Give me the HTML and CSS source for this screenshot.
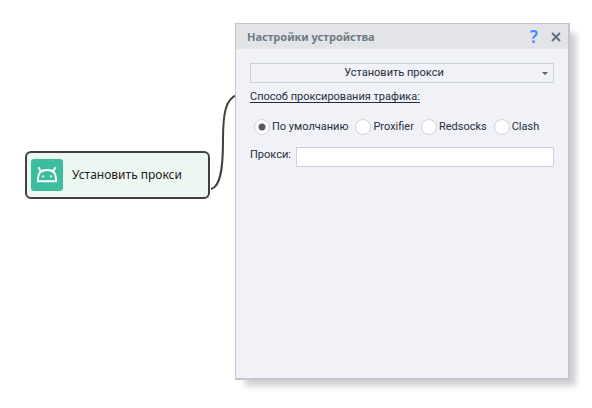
FILE: index.html
```html
<!DOCTYPE html>
<html lang="ru">
<head>
<meta charset="utf-8">
<title>Настройки устройства</title>
<link rel="stylesheet" href="styles.css">
</head>
<body>
<main class="canvas">
  <svg class="connector" width="32" height="100" viewBox="0 0 32 100" aria-hidden="true">
    <path d="M4 98C14 96 16 75 16 50C16 24 18 8 30 4"/>
  </svg>
  <div class="node">
    <svg class="node-icon" width="32" height="32" viewBox="0 0 32 32" aria-hidden="true">
      <rect width="32" height="32" rx="3" fill="#3dbd9f"/>
      <path d="M7 22.200V19.500C7 13.500 10.500 11 16 11S25 13.500 25 19.500V22.200ZM9.800 12.500L7.500 8.200M22.200 12.500L24.500 8.200" fill="none" stroke="#fff" stroke-width="1.900"/>
      <circle cx="12" cy="17.300" r="1.100" fill="#fff"/>
      <circle cx="20" cy="17.300" r="1.100" fill="#fff"/>
    </svg>
    <span>Установить прокси</span>
  </div>
  <section class="panel">
    <header class="panel-header">
      <h1>Настройки устройства</h1>
      <button class="help" type="button" aria-label="Справка">?</button>
      <button class="close" type="button" aria-label="Закрыть">
        <svg width="10" height="10" viewBox="0 0 10 10"><path d="M1 1L9 9M9 1L1 9"/></svg>
      </button>
    </header>
    <form class="panel-body">
      <div class="select">
        <select aria-label="Действие"><option>Установить прокси</option></select>
        <svg class="arrow" width="6" height="3" viewBox="0 0 6 3" aria-hidden="true"><path d="M0 0H6L3 3Z"/></svg>
      </div>
      <fieldset>
        <legend>Способ проксирования трафика:</legend>
        <div class="radios">
          <label><input type="radio" name="method" checked>По умолчанию</label>
          <label><input type="radio" name="method">Proxifier</label>
          <label><input type="radio" name="method">Redsocks</label>
          <label><input type="radio" name="method">Clash</label>
        </div>
      </fieldset>
      <div class="field">
        <label for="proxy">Прокси:</label>
        <input id="proxy" type="text">
      </div>
    </form>
  </section>
</main>
</body>
</html>
```
FILE: styles.css
```css
* {
  box-sizing: border-box;
}

body {
  margin: 0;
  background: #fff;
  color: #282d3c;
  font: 12px/16px "Noto Sans", "Open Sans", sans-serif;
}

.canvas {
  position: relative;
  min-height: 100vh;
  overflow: hidden;
}

.connector {
  position: absolute;
  left: 207px;
  top: 91px;
  fill: none;
  stroke: #404040;
  stroke-width: 2;
}

.node {
  position: absolute;
  left: 25px;
  top: 151px;
  display: flex;
  align-items: center;
  gap: 9px;
  min-width: 185px;
  padding: 6px 4px;
  border: 2px solid #404040;
  border-radius: 6px;
  background: #edf7f2;
  color: #202020;
}

.panel {
  position: absolute;
  left: 235px;
  right: 22px;
  top: 23px;
  bottom: 28px;
  border: 1px solid #c3c6ce;
  border-right-width: 2px;
  border-bottom-width: 2px;
  background: #f0f2f7;
  box-shadow: 8px 8px 6px -2px #00000030;
}

.panel-header {
  display: flex;
  align-items: center;
  height: 25px;
  padding: 0 7px 0 11px;
  background: #e2e4e8;
}

h1 {
  flex: 1;
  margin: 0;
  color: #6c7a85;
  font-size: 11px;
  font-weight: 700;
}

button {
  display: grid;
  place-items: center;
  padding: 0;
  border: 0;
  background: none;
  font-family: inherit;
}

.help {
  width: 16px;
  margin-right: 9px;
  color: #4c84ff;
  font-size: 17px;
  font-weight: 600;
  line-height: 20px;
}

.close svg {
  fill: none;
  stroke: #64707e;
  stroke-width: 2;
}

.panel-body {
  padding: 14px 14px 0;
  font-family: Roboto, "Noto Sans", sans-serif;
  font-size: 11px;
}

.select {
  position: relative;
}

select {
  display: block;
  width: 100%;
  height: 20px;
  padding: 0 16px 0 0;
  appearance: none;
  border: 1px solid #cdd1db;
  border-radius: 0;
  background: #f0f2f7;
  color: inherit;
  font: inherit;
  text-align-last: center;
}

.arrow {
  position: absolute;
  right: 6px;
  top: 9px;
  fill: #555d66;
  pointer-events: none;
}

fieldset {
  margin: 6px 0 0;
  padding: 0;
  border: 0;
}

legend {
  padding: 0;
  text-decoration: underline;
  text-underline-offset: 2px;
}

.radios {
  display: flex;
  gap: 7px;
  padding: 14px 0 0 4px;
}

.radios label {
  display: flex;
  align-items: center;
  gap: 2px;
  white-space: nowrap;
}

input[type="radio"] {
  width: 16px;
  height: 16px;
  margin: 0;
  appearance: none;
  border: 1px solid #d0d3dd;
  border-radius: 50%;
  background: #fff;
}

input[type="radio"]:checked {
  background: radial-gradient(circle, #555a60 0 3px, #fff 4px);
}

.field {
  display: flex;
  gap: 5px;
  margin-top: 12px;
}

.field input {
  flex: 1;
  min-width: 0;
  height: 20px;
  padding: 0 4px;
  border: 1px solid #cdd1db;
  background: #fff;
  font: inherit;
}
```
